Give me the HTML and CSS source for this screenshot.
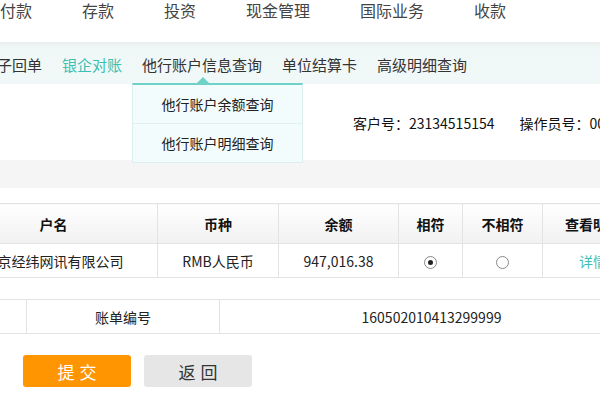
FILE: index.html
```html
<!DOCTYPE html>
<html lang="zh-CN">
<head>
<meta charset="utf-8">
<title>他行账户信息查询</title>
<link rel="stylesheet" href="styles.css">
</head>
<body>
<div class="page">
  <ul class="topnav">
    <li>付款</li>
    <li>存款</li>
    <li>投资</li>
    <li>现金管理</li>
    <li>国际业务</li>
    <li>收款</li>
  </ul>
  <ul class="subnav">
    <li>电子回单</li>
    <li class="active">银企对账</li>
    <li class="open">他行账户信息查询
      <div class="dropdown">
        <div class="dd-item">他行账户余额查询</div>
        <div class="dd-item">他行账户明细查询</div>
      </div>
    </li>
    <li>单位结算卡</li>
    <li>高级明细查询</li>
  </ul>
  <div class="info">
    <span class="info-item">客户号：23134515154</span>
    <span class="info-item">操作员号：0001</span>
  </div>
  <div class="band"></div>
  <div class="tables">
    <table class="grid main">
      <colgroup>
        <col style="width:208px"><col style="width:121px"><col style="width:120px"><col style="width:64px"><col style="width:80px"><col style="width:101px">
      </colgroup>
      <thead>
        <tr><th>户名</th><th>币种</th><th>余额</th><th>相符</th><th>不相符</th><th>查看明细</th></tr>
      </thead>
      <tbody>
        <tr>
          <td>北京经纬网讯有限公司</td>
          <td>RMB人民币</td>
          <td>947,016.38</td>
          <td><span class="radio checked"></span></td>
          <td><span class="radio"></span></td>
          <td><span class="link">详情</span></td>
        </tr>
      </tbody>
    </table>
    <table class="grid bill">
      <colgroup>
        <col style="width:77px"><col style="width:193px"><col style="width:424px">
      </colgroup>
      <tbody>
        <tr><td></td><td>账单编号</td><td>160502010413299999</td></tr>
      </tbody>
    </table>
  </div>
  <div class="actions">
    <button class="btn primary">提交</button>
    <button class="btn secondary">返回</button>
  </div>
</div>
</body>
</html>
```
FILE: styles.css
```css
html, body {
  margin: 0;
  padding: 0;
  background: #fff;
}
.page {
  width: 600px;
  height: 400px;
  overflow: hidden;
  position: relative;
  font-family: "Noto Sans CJK SC", "Microsoft YaHei", sans-serif;
  color: #222;
}
ul {
  list-style: none;
  margin: 0;
  padding: 0;
}
.topnav {
  display: flex;
  height: 42px;
  margin-left: -25px;
  white-space: nowrap;
}
.topnav li {
  padding: 0 25px;
  font-size: 16px;
  line-height: 20px;
  color: #444;
}
.subnav {
  display: flex;
  height: 42px;
  box-sizing: border-box;
  padding-top: 4px;
  background: linear-gradient(#e8efee 0, #f0f8f7 6px, #f1f9f8 100%);
  white-space: nowrap;
}
.subnav li {
  padding: 0 10px;
  font-size: 15px;
  line-height: 38px;
  color: #333;
  position: relative;
}
.subnav li:first-child {
  margin-left: -28px;
}
.subnav li.active {
  color: #3dbfb1;
}
.dropdown {
  position: absolute;
  left: 0;
  top: 37px;
  width: 171px;
  box-sizing: border-box;
  background: #f3fcfc;
  border: 1px solid #dcefee;
  border-top: 2px solid #6fd2c9;
  z-index: 5;
}
.dropdown::before {
  content: "";
  position: absolute;
  left: 64px;
  top: -8px;
  border-left: 6px solid transparent;
  border-right: 6px solid transparent;
  border-bottom: 6px solid #6fd2c9;
}
.dd-item {
  height: 38px;
  line-height: 38px;
  text-align: center;
  font-size: 14px;
  color: #222;
}
.dd-item + .dd-item {
  border-top: 1px solid #e2f1f0;
}
.info {
  height: 76px;
  display: flex;
  align-items: center;
  padding-left: 353px;
  padding-top: 2px;
  box-sizing: border-box;
  white-space: nowrap;
  font-size: 14px;
  color: #111;
}
.info-item {
  margin-right: 25px;
}
.band {
  height: 28px;
  background: #f5f5f5;
  margin-bottom: 15px;
}
.tables {
  margin-left: -51px;
  width: 694px;
}
.grid {
  width: 694px;
  table-layout: fixed;
  border-collapse: collapse;
  font-size: 14px;
  color: #222;
}
.grid th, .grid td {
  border: 1px solid #e3e3e3;
  text-align: center;
  padding: 0;
  white-space: nowrap;
  overflow: hidden;
}
.grid th {
  height: 39px;
  font-weight: bold;
  color: #111;
  background: linear-gradient(#ffffff, #f1f1f1);
}
.grid td {
  height: 33px;
}
.bill {
  margin-top: 21px;
}
.radio {
  display: inline-block;
  width: 11px;
  height: 11px;
  border: 1px solid #8a8a8a;
  border-radius: 50%;
  vertical-align: middle;
  position: relative;
  background: #fff;
}
.radio.checked::after {
  content: "";
  position: absolute;
  left: 3px;
  top: 3px;
  width: 5px;
  height: 5px;
  border-radius: 50%;
  background: #222;
}
.link {
  color: #3dbfb1;
}
.actions {
  display: flex;
  gap: 13px;
  padding: 21px 0 0 23px;
}
.btn {
  width: 108px;
  height: 32px;
  border: none;
  border-radius: 3px;
  font-family: "Noto Sans CJK SC", "Microsoft YaHei", sans-serif;
  font-size: 17px;
  letter-spacing: 5px;
  text-indent: 5px;
  padding: 0;
}
.btn.primary {
  background: #ff9500;
  color: #fff;
}
.btn.secondary {
  background: #e6e6e6;
  color: #333;
}
```
